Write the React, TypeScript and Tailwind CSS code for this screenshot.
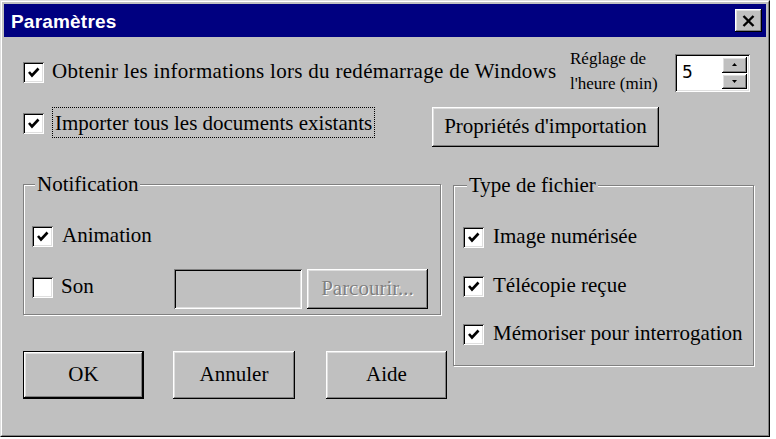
import React from "react";

const raised =
  "shadow-[inset_-1px_-1px_0_#000,inset_1px_1px_0_#fff,inset_-2px_-2px_0_#808080,inset_2px_2px_0_#dfdfdf]";
const sunken =
  "shadow-[inset_1px_1px_0_#808080,inset_-1px_-1px_0_#fff,inset_2px_2px_0_#000,inset_-2px_-2px_0_#dfdfdf]";
const etched = "border border-[#808080] shadow-[inset_1px_1px_0_#fff,1px_1px_0_#fff]";

function Check({ checked }: { checked: boolean }) {
  return (
    <div className={`w-[21px] h-[21px] bg-white shrink-0 flex items-center justify-center ${sunken}`}>
      {checked && (
        <svg width="13" height="13" viewBox="0 0 13 13">
          <path d="M2 6 L5 9.5 L11.5 2.5" stroke="#000" strokeWidth="2.6" fill="none" />
        </svg>
      )}
    </div>
  );
}

function Button({
  children,
  className = "",
  isDefault = false,
  disabled = false,
}: {
  children: React.ReactNode;
  className?: string;
  isDefault?: boolean;
  disabled?: boolean;
}) {
  const inner = (
    <div
      className={`w-full h-full flex items-center justify-center bg-[#c0c0c0] ${raised} ${
        disabled ? "text-[#808080] [text-shadow:1px_1px_0_#fff]" : "text-black"
      }`}
    >
      {children}
    </div>
  );
  if (isDefault) {
    return <div className={`border border-black ${className}`}>{inner}</div>;
  }
  return <div className={className}>{inner}</div>;
}

function Group({
  label,
  labelLeft,
  className,
  children,
}: {
  label: string;
  labelLeft: string;
  className: string;
  children: React.ReactNode;
}) {
  return (
    <div className={`relative ${etched} ${className}`}>
      <div
        className={`absolute -top-[13px] ${labelLeft} px-[2px] bg-[#c0c0c0] leading-[24px] text-[21px]`}
      >
        {label}
      </div>
      {children}
    </div>
  );
}

export default function App() {
  return (
    <div className="w-[776px] h-[439px] bg-white font-['Liberation_Serif',serif] text-[21px] text-black">
      <div className="w-[770px] h-[437px] bg-[#c0c0c0] border border-t-[#dfdfdf] border-l-[#dfdfdf] border-r-black border-b-black">
        <div className="h-full border border-t-white border-l-white border-r-[#808080] border-b-[#808080] p-[2px] flex flex-col">
          {/* Title bar */}
          <div className="h-[33px] bg-[#000080] flex items-center pl-[7px] pr-[4px] shrink-0">
            <span className="font-['Liberation_Sans',Arial,sans-serif] font-bold text-[19px] tracking-[0.2px] text-white leading-[33px] mt-[1px]">
              Paramètres
            </span>
            <div className={`ml-auto w-[27px] h-[23px] bg-[#c0c0c0] flex items-center justify-center ${raised}`}>
              <svg width="13" height="12" viewBox="0 0 13 12">
                <path d="M1.5 1 L11.5 11 M11.5 1 L1.5 11" stroke="#000" strokeWidth="2.4" />
              </svg>
            </div>
          </div>

          {/* Body */}
          <div className="flex-1 flex flex-col pl-[19px]">
            {/* Row 1 */}
            <div className="mt-[13px] h-[45px] flex items-center">
              <div className="w-[547px] flex items-center">
                <Check checked />
                <span className="ml-[8px] leading-[24px] mb-[4px] tracking-[0.3px]">
                  Obtenir les informations lors du redémarrage de Windows
                </span>
              </div>
              <div className="w-[105px] text-[17px] leading-[25px] mb-[3px]">
                <div>Réglage de</div>
                <div>l'heure (min)</div>
              </div>
              <div className={`w-[75px] h-[38px] bg-white flex items-center pl-[7px] pr-[3px] ${sunken}`}>
                <span className="font-['DejaVu_Sans',sans-serif] text-[17px] leading-none flex-1">5</span>
                <div className="flex flex-col gap-[1px]">
                  <div className={`w-[25px] h-[16px] bg-[#c0c0c0] flex items-center justify-center ${raised}`}>
                    <svg width="5" height="3" viewBox="0 0 5 3">
                      <path d="M2.5 0 L5 3 L0 3 Z" fill="#000" />
                    </svg>
                  </div>
                  <div className={`w-[25px] h-[15px] bg-[#c0c0c0] flex items-center justify-center ${raised}`}>
                    <svg width="5" height="3" viewBox="0 0 5 3">
                      <path d="M0 0 L5 0 L2.5 3 Z" fill="#000" />
                    </svg>
                  </div>
                </div>
              </div>
            </div>

            {/* Row 2 */}
            <div className="mt-[12px] h-[40px] flex items-start">
              <div className="w-[409px] flex items-start">
                <div className="mt-[6px]">
                  <Check checked />
                </div>
                <div className="ml-[8px] h-[31px] px-[2px] border border-dotted border-black flex items-center leading-[24px]">
                  Importer tous les documents existants
                </div>
              </div>
              <Button className="w-[227px] h-[40px]">Propriétés d'importation</Button>
            </div>

            {/* Row 3 */}
            <div className="mt-[37px] flex items-start">
              <div className="w-[424px] flex flex-col">
                <Group label="Notification" labelLeft="left-[11px]" className="w-[418px] h-[131px]">
                  <div className="flex flex-col pt-[40px] pl-[8px]">
                    <div className="h-[22px] flex items-center">
                      <Check checked />
                      <span className="ml-[9px] leading-[24px] mb-[2px]">Animation</span>
                    </div>
                    <div className="mt-[22px] h-[40px] flex items-center">
                      <div className="w-[142px] flex items-center mb-[3px]">
                        <Check checked={false} />
                        <span className="ml-[8px] leading-[24px] mb-[3px]">Son</span>
                      </div>
                      <div className={`w-[128px] h-[40px] bg-[#c0c0c0] ${sunken}`} />
                      <Button disabled className="ml-[5px] w-[121px] h-[40px]">
                        Parcourir...
                      </Button>
                    </div>
                  </div>
                </Group>
                <div className="mt-[36px] flex">
                  <Button isDefault className="w-[121px] h-[48px]">
                    OK
                  </Button>
                  <Button className="ml-[29px] w-[122px] h-[48px]">Annuler</Button>
                  <Button className="ml-[31px] w-[121px] h-[48px]">Aide</Button>
                </div>
              </div>
              <div className="ml-[6px] mt-[1px]">
                <Group label="Type de fichier" labelLeft="left-[13px]" className="w-[301px] h-[181px]">
                  <div className="flex flex-col pt-[40px] pl-[9px]">
                    <div className="h-[22px] flex items-center">
                      <Check checked />
                      <span className="ml-[9px] leading-[24px] mb-[2px]">Image numérisée</span>
                    </div>
                    <div className="mt-[27px] h-[22px] flex items-center">
                      <Check checked />
                      <span className="ml-[9px] leading-[24px] mb-[2px]">Télécopie reçue</span>
                    </div>
                    <div className="mt-[26px] h-[22px] flex items-center">
                      <Check checked />
                      <span className="ml-[9px] leading-[24px] mb-[2px]">Mémoriser pour interrogation</span>
                    </div>
                  </div>
                </Group>
              </div>
            </div>
          </div>
        </div>
      </div>
    </div>
  );
}
